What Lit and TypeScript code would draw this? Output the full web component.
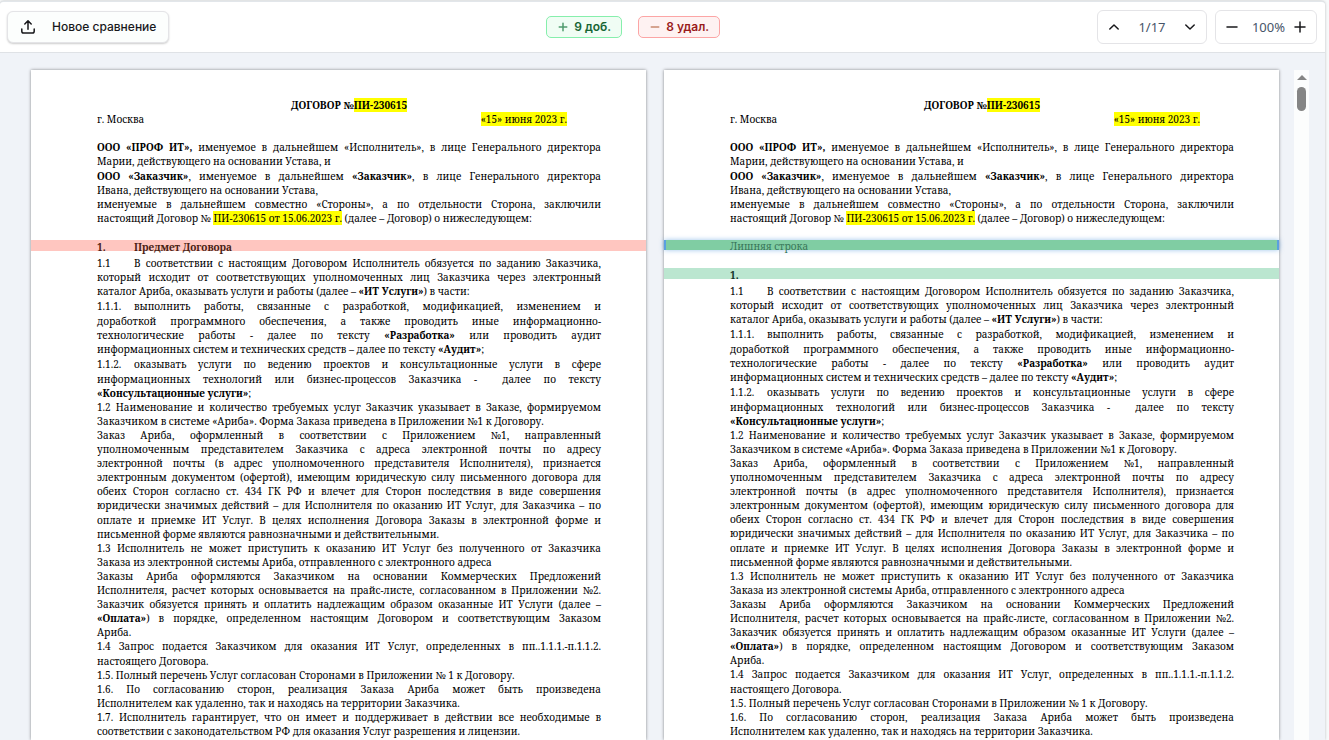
import { LitElement, html, css, svg, nothing } from "lit";
import { customElement, property, state } from "lit/decorators.js";

type Kind = "left" | "right";

/* Line markup: *bold*, =highlighted=, trailing "|" closes a line that is not justified, leading "+" adds a taller line. */
const PREAMBLE: string[][] = [
  [
    "*ООО «ПРОФ ИТ»,* именуемое в дальнейшем «Исполнитель», в лице Генерального директора",
    "Марии, действующего на основании Устава, и|",
  ],
  [
    "+*ООО «Заказчик»*, именуемое в дальнейшем *«Заказчик»*, в лице Генерального директора",
    "Ивана, действующего на основании Устава,|",
  ],
  [
    "именуемые в дальнейшем совместно «Стороны», а по отдельности Сторона, заключили",
    "настоящий Договор № =ПИ-230615 от 15.06.2023 г.= (далее – Договор) о нижеследующем:|",
  ],
];

const CLAUSES: string[][] = [
  [
    "1.1~В соответствии с настоящим Договором Исполнитель обязуется по заданию Заказчика,",
    "который исходит от соответствующих уполномоченных лиц Заказчика через электронный",
    "каталог Ариба, оказывать услуги и работы (далее – *«ИТ Услуги»*) в части:|",
  ],
  [
    "+1.1.1.~выполнить работы, связанные с разработкой, модификацией, изменением и",
    "+доработкой программного обеспечения, а также проводить иные информационно-",
    "технологические работы - далее по тексту *«Разработка»* или проводить аудит",
    "информационных систем и технических средств – далее по тексту *«Аудит»*;|",
  ],
  [
    "+1.1.2.~оказывать услуги по ведению проектов и консультационные услуги в сфере",
    "+информационных технологий или бизнес-процессов Заказчика - \u00a0далее по тексту",
    "*«Консультационные услуги»*;|",
  ],
  [
    "1.2 Наименование и количество требуемых услуг Заказчик указывает в Заказе, формируемом",
    "Заказчиком в системе «Ариба». Форма Заказа приведена в Приложении №1 к Договору.|",
  ],
  [
    "Заказ Ариба, оформленный в соответствии с Приложением №1, направленный",
    "уполномоченным представителем Заказчика с адреса электронной почты по адресу",
    "электронной почты (в адрес уполномоченного представителя Исполнителя), признается",
    "электронным документом (офертой), имеющим юридическую силу письменного договора для",
    "обеих Сторон согласно ст. 434 ГК РФ и влечет для Сторон последствия в виде совершения",
    "юридически значимых действий – для Исполнителя по оказанию ИТ Услуг, для Заказчика – по",
    "+оплате и приемке ИТ Услуг. В целях исполнения Договора Заказы в электронной форме и",
    "письменной форме являются равнозначными и действительными.|",
  ],
  [
    "1.3 Исполнитель не может приступить к оказанию ИТ Услуг без полученного от Заказчика",
    "Заказа из электронной системы Ариба, отправленного с электронного адреса|",
  ],
  [
    "Заказы Ариба оформляются Заказчиком на основании Коммерческих Предложений",
    "Исполнителя, расчет которых основывается на прайс-листе, согласованном в Приложении №2.",
    "Заказчик обязуется принять и оплатить надлежащим образом оказанные ИТ Услуги (далее –",
    "*«Оплата»*) в порядке, определенном настоящим Договором и соответствующим Заказом",
    "Ариба.|",
  ],
  [
    "1.4 Запрос подается Заказчиком для оказания ИТ Услуг, определенных в пп..1.1.1.-п.1.1.2.",
    "+настоящего Договора.|",
  ],
  ["1.5. Полный перечень Услуг согласован Сторонами в Приложении № 1 к Договору.|"],
  [
    "1.6. По согласованию сторон, реализация Заказа Ариба может быть произведена",
    "Исполнителем как удаленно, так и находясь на территории Заказчика.|",
  ],
];

const WARRANTY: string[][] = [
  [
    "1.7. Исполнитель гарантирует, что он имеет и поддерживает в действии все необходимые в",
    "соответствии с законодательством РФ для оказания Услуг разрешения и лицензии.|",
  ],
];

const icons = {
  upload: svg`<path d="M8 10.2V2M4.8 5 8 1.8 11.2 5M1.8 10v2.2c0 1.2.7 1.8 1.8 1.8h8.8c1.1 0 1.8-.6 1.8-1.8V10"/>`,
  up: svg`<path d="m3.8 10 4.2-4 4.2 4"/>`,
  down: svg`<path d="m3.8 6 4.2 4 4.2-4"/>`,
  plus: svg`<path d="M8 3v10M3 8h10"/>`,
  minus: svg`<path d="M3 8h10"/>`,
};

const icon = (name: keyof typeof icons) =>
  html`<svg class="icon ${name}" viewBox="0 0 16 16" aria-hidden="true">${icons[name]}</svg>`;

@customElement("contract-page")
export class ContractPage extends LitElement {
  @property() kind: Kind = "left";

  static styles = css`
    :host {
      display: block;
      box-sizing: border-box;
      min-width: 0;
      padding: 28px 45px 0 66px;
      background: #fff;
      box-shadow: 0 0 3px rgba(0, 0, 0, 0.45);
      color: #000;
      font: 10px/14px "Noto Serif", "Droid Serif", serif;
    }
    h1, h2, p { margin: 0; font-size: inherit; line-height: inherit; }
    h1 { text-align: center; }
    mark { display: inline-block; background: #ff0; color: inherit; }
    .place { display: flex; justify-content: space-between; padding-right: 34px; margin-bottom: 14px; }
    .line { display: block; white-space: nowrap; text-align-last: justify; }
    .line.last { text-align-last: left; }
    .line.tall { padding-top: 1px; }
    .num { display: inline-block; width: 37px; text-align-last: left; }
    .ref { display: inline-block; text-align-last: left; }
    .bar {
      height: 11px;
      margin: 15px -45px 5px -66px;
      padding-left: 66px;
      background: #ffc6c0;
      color: #4a1e14;
    }
    .bar.added { background: #bbe6d0; color: #12332a; margin-top: 18px; }
    .bar.current {
      height: 10px;
      line-height: 12px;
      border: solid #5b9fe0;
      border-width: 0 2px;
      padding-left: 64px;
      margin-bottom: 0;
      background: #80cda3;
      box-shadow: 0 0 5px rgba(59, 140, 220, 0.5);
      color: #39775a;
    }
  `;

  private inline(text: string) {
    return text.split(/(\*[^*]+\*|=[^=]+=|№\d)/).map((part) => {
      if (part.startsWith("*")) return html`<b>${part.slice(1, -1)}</b>`;
      if (part.startsWith("=")) return html`<mark>${part.slice(1, -1)}</mark>`;
      if (/^№\d$/.test(part)) return html`<span class="ref">${part}</span>`;
      return part;
    });
  }

  private line(source: string) {
    const tall = source.startsWith("+");
    const last = source.endsWith("|");
    const text = source.slice(tall ? 1 : 0, last ? -1 : undefined);
    const [num, rest] = text.includes("~") ? text.split("~") : ["", text];
    return html`<span class="line ${tall ? "tall" : ""} ${last ? "last" : ""}"
      >${num ? html`<span class="num">${num}</span>` : nothing}${this.inline(rest)}</span
    >`;
  }

  private paragraphs(list: string[][]) {
    return list.map((lines) => html`<p>${lines.map((l) => this.line(l))}</p>`);
  }

  render() {
    return html`
      <h1>ДОГОВОР №<mark>ПИ-230615</mark></h1>
      <p class="place"><span>г. Москва</span><mark>«15» июня 2023 г.</mark></p>
      ${this.paragraphs(PREAMBLE)}
      ${this.kind === "left"
        ? html`<h2 class="bar"><span class="num">1.</span>Предмет Договора</h2>`
        : html`<p class="bar current">Лишняя строка</p>
            <h2 class="bar added">1.</h2>`}
      ${this.paragraphs(CLAUSES)}
      ${this.kind === "left" ? this.paragraphs(WARRANTY) : nothing}
    `;
  }
}

@customElement("app-root")
export class AppRoot extends LitElement {
  @state() private page = 1;
  @state() private zoom = 100;

  static styles = css`
    :host {
      display: block;
      box-sizing: border-box;
      height: 100vh;
      overflow: hidden;
      padding: 1px 4px 0 0;
      background: #f8fafb;
      font: 12px/20px Inter, sans-serif;
    }
    .app {
      display: flex;
      flex-direction: column;
      height: 100%;
      box-sizing: border-box;
      border-top: 1px solid #e2e6ea;
      border-radius: 4px 4px 0 0;
      background: #f0f3f8;
      box-shadow: 0 0 3px rgba(0, 0, 0, 0.25);
      overflow: hidden;
    }
    header {
      display: flex;
      justify-content: space-between;
      align-items: center;
      height: 50px;
      padding: 0 8px 0 7px;
      background: #fff;
      border-bottom: 1px solid #dfe2e6;
    }
    button {
      display: flex;
      align-items: center;
      justify-content: center;
      padding: 0;
      border: 0;
      background: none;
      color: #18181b;
      font: inherit;
      cursor: pointer;
    }
    .icon {
      width: 16px;
      height: 16px;
      fill: none;
      stroke: currentColor;
      stroke-width: 1.5;
      stroke-linecap: round;
      stroke-linejoin: round;
    }
    .new {
      gap: 16px;
      height: 32px;
      padding: 0 12px;
      border: 1px solid #e4e4e7;
      border-radius: 6px;
      background: #fcfefd;
      box-shadow: 0 1px 2px rgba(0, 0, 0, 0.2);
      font-weight: 500;
    }
    .counts { display: flex; gap: 16px; }
    .count {
      display: flex;
      align-items: center;
      gap: 5px;
      padding: 0 10px;
      border: 1px solid #86efac;
      border-radius: 5px;
      background: #f0fdf4;
      color: #166534;
      font-weight: 600;
    }
    .count.removed { border-color: #fca5a5; background: #fef2f2; color: #991b1b; }
    .count .icon { width: 12px; height: 12px; color: #4f9a6d; stroke-width: 2; }
    .count.removed .icon { color: #c98a70; }
    .tools {
      display: flex;
      gap: 8px;
      color: #475569;
      font: 13px/20px "Noto Sans", sans-serif;
    }
    .group {
      display: flex;
      align-items: center;
      height: 32px;
      border: 1px solid #e4e4e7;
      border-radius: 6px;
    }
    .group button { width: 32px; height: 32px; }
    .group output { min-width: 44px; text-align: center; }
    .group.zoom { padding-right: 5px; }
    .group.zoom output { min-width: 41px; }
    .group.zoom button:last-child { width: 22px; }
    .viewer {
      flex: 1;
      min-height: 0;
      display: flex;
      gap: 15px;
      padding: 17px 16px 0 31px;
    }
    .pages {
      flex: 1;
      display: grid;
      grid-template-columns: 1fr 1fr;
      gap: 18px;
    }
    .track {
      display: flex;
      flex-direction: column;
      align-items: center;
      gap: 7px;
      width: 15px;
      padding-top: 5px;
      box-sizing: border-box;
      background: #fcfdfd;
    }
    .arrow { width: 10px; height: 5px; fill: #858585; }
    .thumb { width: 9px; height: 24px; border-radius: 5px; background: #858585; }
  `;

  private turn(step: number) {
    this.page = Math.min(17, Math.max(1, this.page + step));
  }

  private scale(step: number) {
    this.zoom = Math.min(200, Math.max(50, this.zoom + step));
  }

  render() {
    return html`
      <div class="app">
        <header>
          <button class="new">${icon("upload")}Новое сравнение</button>
          <div class="counts">
            <span class="count">${icon("plus")}9 доб.</span>
            <span class="count removed">${icon("minus")}8 удал.</span>
          </div>
          <div class="tools">
            <div class="group">
              <button aria-label="Предыдущая страница" @click=${() => this.turn(-1)}>${icon("up")}</button>
              <output>${this.page}/17</output>
              <button aria-label="Следующая страница" @click=${() => this.turn(1)}>${icon("down")}</button>
            </div>
            <div class="group zoom">
              <button aria-label="Уменьшить" @click=${() => this.scale(-10)}>${icon("minus")}</button>
              <output>${this.zoom}%</output>
              <button aria-label="Увеличить" @click=${() => this.scale(10)}>${icon("plus")}</button>
            </div>
          </div>
        </header>
        <main class="viewer">
          <div class="pages">
            <contract-page kind="left"></contract-page>
            <contract-page kind="right"></contract-page>
          </div>
          <div class="track" aria-hidden="true">
            <svg class="arrow" viewBox="0 0 10 5"><path d="M0 5 5 0l5 5z" /></svg>
            <div class="thumb"></div>
          </div>
        </main>
      </div>
    `;
  }
}
